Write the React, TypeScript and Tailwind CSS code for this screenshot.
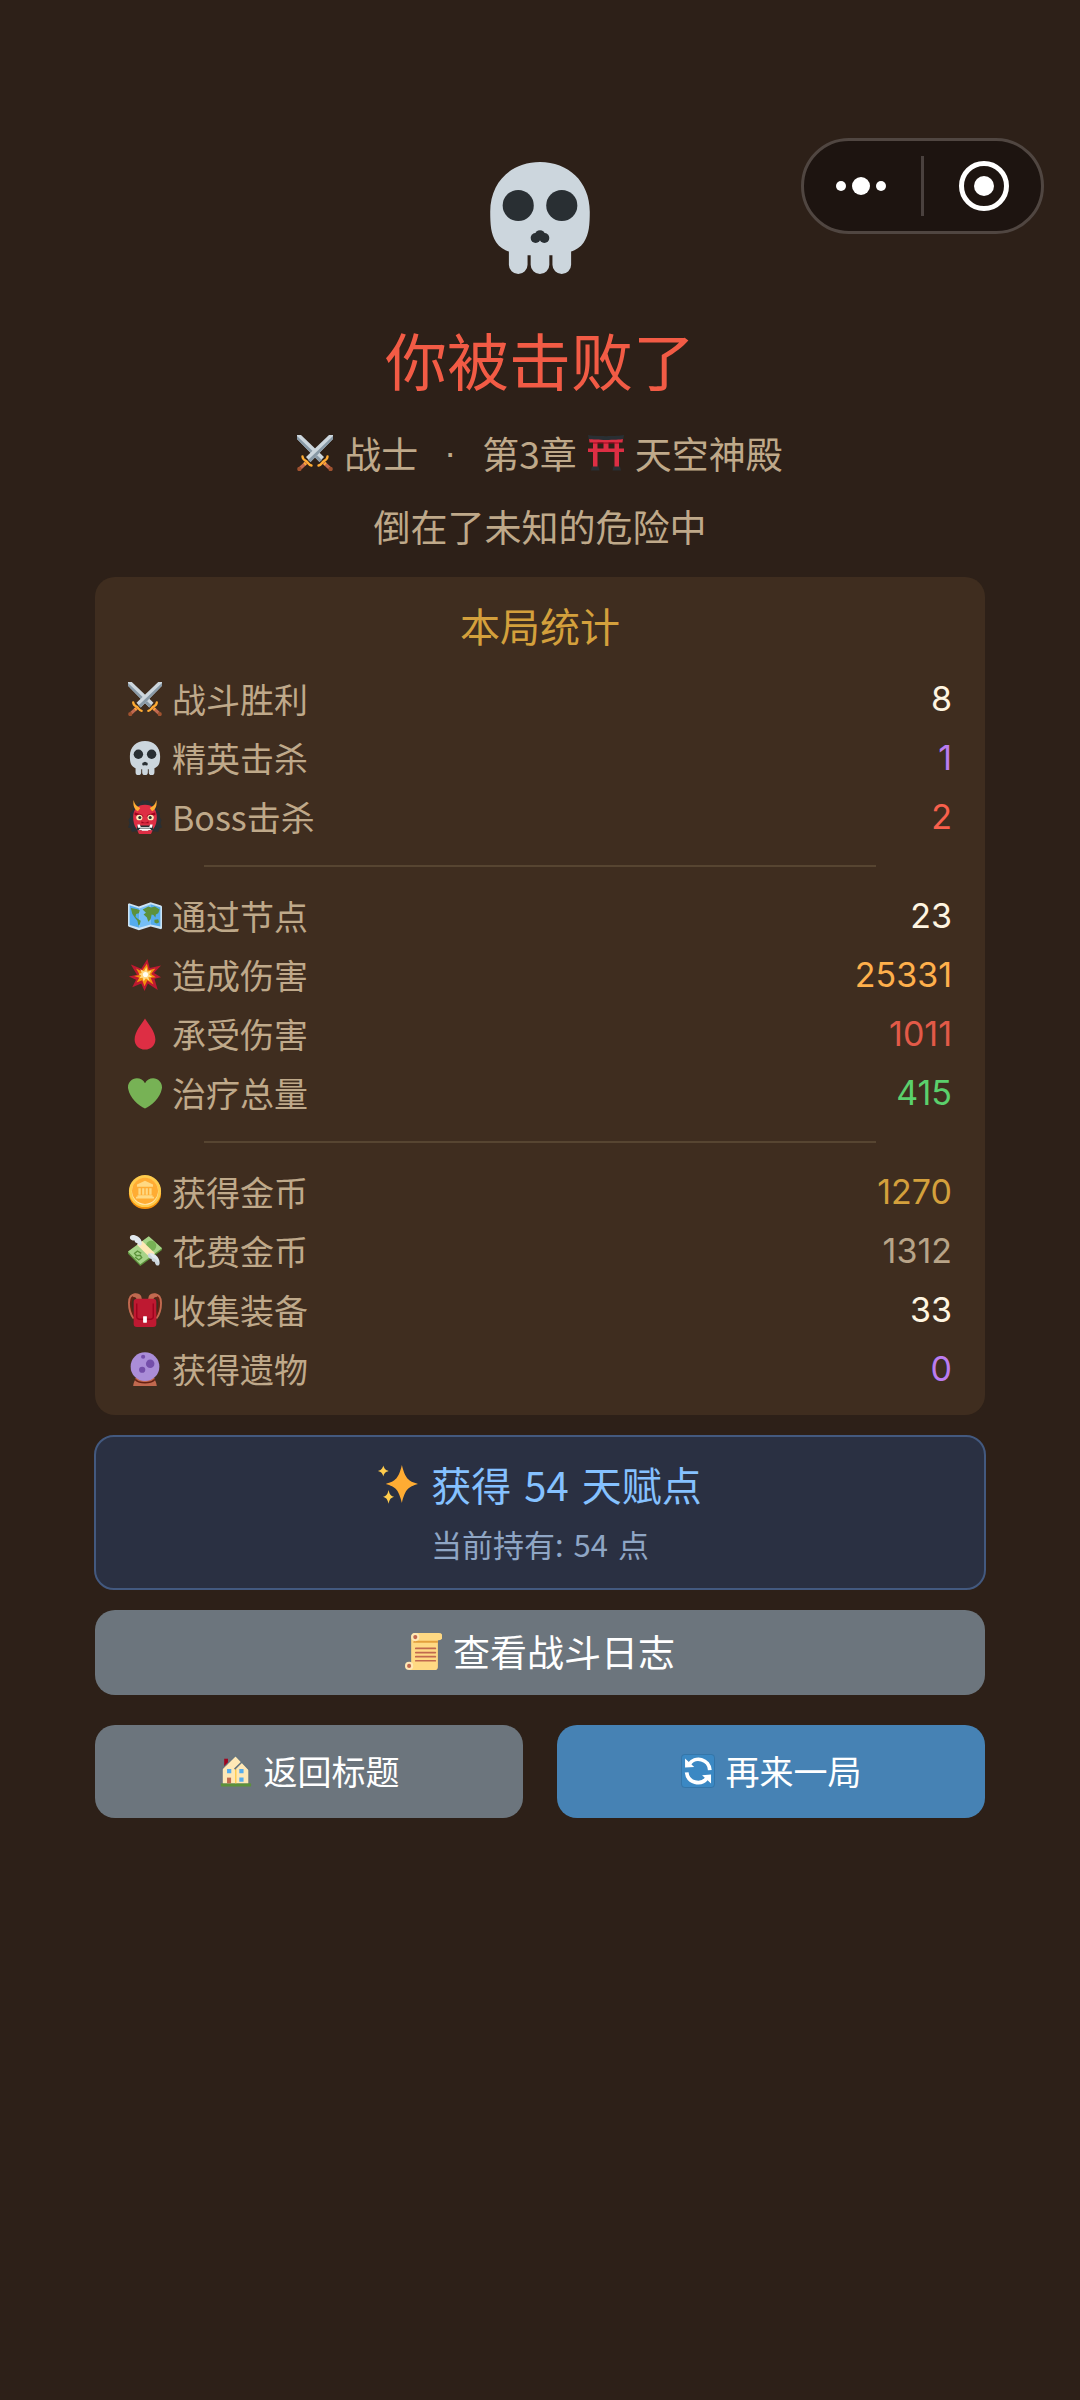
import { ReactNode } from "react";
import clsx from "clsx";

type IconProps = { className?: string };

function Emoji({ className, children }: IconProps & { children: ReactNode }) {
  return (
    <svg viewBox="0 0 36 36" aria-hidden="true" className={clsx("shrink-0", className)}>
      {children}
    </svg>
  );
}

function Skull({ className }: IconProps) {
  return (
    <Emoji className={className}>
      <path
        fill="#CCD6DD"
        d="M18 0C9 0 2 6.2 2 16c0 4 .2 7.2 1.9 9.8 1.1 1.700 2.700 2.500 4.100 3V33a3 3 0 0 0 6 0v-3h1v3a3 3 0 0 0 6 0v-3h1v3a3 3 0 0 0 6 0v-4.200c1.400-.5 3-1.300 4.100-3C33.800 23.200 34 20 34 16 34 6.200 27 0 18 0z"
      />
      <g fill="#292F33">
        <circle cx="11" cy="14" r="5" />
        <circle cx="25" cy="14" r="5" />
        <circle cx="16.6" cy="24.4" r="1.6" />
        <circle cx="19.4" cy="24.4" r="1.6" />
        <circle cx="18" cy="23.5" r="1.6" />
      </g>
    </Emoji>
  );
}

function Swords({ className }: IconProps) {
  return (
    <Emoji className={className}>
      <path fill="#CCD6DD" d="M0 0h4l23 22-4.500 5L0 4z" />
      <path fill="#8899A6" d="M0 1l25 24-2.500 2L0 4z" />
      <path fill="#CCD6DD" d="M36 0h-4L9 22l4.500 5L36 4z" />
      <path fill="#8899A6" d="M36 1L11 25l2.500 2L36 4z" />
      <path stroke="#C1694F" strokeWidth="3.400" d="M10.500 26.500l-7 6.500M25.500 26.500l7 6.500" />
      <path stroke="#FFAC33" strokeWidth="1.600" d="M7 27.500l2 2.500M29 27.500l-2 2.500" />
      <circle cx="2.400" cy="34" r="2.200" fill="#A0522F" />
      <circle cx="33.600" cy="34" r="2.200" fill="#A0522F" />
      <path
        fill="none"
        stroke="#FFAC33"
        strokeWidth="2.400"
        strokeLinecap="round"
        strokeLinejoin="round"
        d="M5.500 21.500c.2 3 1.500 3.500 3.500 4.500s2.500 4 5.500 4.500M30.500 21.500c-.2 3-1.500 3.500-3.500 4.500s-2.500 4-5.500 4.500"
      />
    </Emoji>
  );
}

function Ogre({ className }: IconProps) {
  return (
    <Emoji className={className}>
      <path
        fill="#292F33"
        d="M13 2l3-2 2 1.500L20 0l3 2 3 2 4 3 1 4 3 3-.5 4 2 3-1 4 1.500 4-3 1-1 4-4-1-4 2H12l-4-2-4 1-1-4-3-1 1.500-4-1-4 2-3L2 14l3-3 1-4 4-3z"
      />
      <path fill="#DD2E44" d="M18 5c8 0 12.500 5 12.500 13 0 5-1 9-3.500 12.500-1 1-2 5.500-3 5.500H12c-1 0-2-4.500-3-5.500C6.500 27 5.500 23 5.500 18 5.500 10 10 5 18 5z" />
      <path fill="#FFAC33" d="M6 0c1 5 3 6 7 8.500L10.500 12C6.500 10 5 5 6 0zM30 0c-1 5-3 6-7 8.500l2.500 3.500C29.500 10 31 5 30 0z" />
      <path fill="#A0041E" d="M7 13l8 2.500 1.500 2.500L7 16zM29 13l-8 2.500-1.500 2.500 9.500-2z" />
      <g fill="#FFE8B6">
        <ellipse cx="12" cy="18.500" rx="3.300" ry="3" />
        <ellipse cx="24" cy="18.500" rx="3.300" ry="3" />
      </g>
      <circle cx="12.500" cy="18.500" r="1.600" fill="#292F33" />
      <circle cx="23.500" cy="18.500" r="1.600" fill="#292F33" />
      <path fill="#A0041E" d="M14.500 22.500c1.500 2 5.500 2 7 0l.5 2h-8z" />
      <path fill="#292F33" d="M10 27h16l1 5H9z" />
      <path fill="#FFF" d="M10 26l2.500 0 1 2.500h9l1-2.500H26l-.5 3.500h-15zM11 32l2-1.800h10l2 1.800-3-.3-1 .8h-6l-1-.8z" />
    </Emoji>
  );
}

function Torii({ className }: IconProps) {
  return (
    <Emoji className={className}>
      <path fill="#DD2E44" d="M1 3.500h34l-.5 4h-33zM0 13.500h36V17H0zM5 7h4.500v25H5zM26.500 7H31v25h-4.500zM15.500 7h5v7h-5z" />
      <path fill="#A0041E" d="M5 7.500h26v1H5z" />
      <path fill="#292F33" d="M0 0c6 1.500 30 1.500 36 0l-.7 4C29 5.200 7 5.200.7 4zM4 31.500h6.500l1 4H3zM25.500 31.500H32l1 4h-8.500z" />
    </Emoji>
  );
}

function WorldMap({ className }: IconProps) {
  return (
    <Emoji className={className}>
      <path fill="#CCE3F3" d="M0 5.500l1-1 10.500 3.500L24 3.500 35 7l1 1v23l-1 1-11-3-12.500 4L1 29.500l-1-1z" />
      <path fill="#55ACEE" d="M1.700 6.500L12 10v20.500L1.700 27.500z" />
      <path fill="#75BEF5" d="M12 10l12-4.500V27l-12 3.500z" />
      <path fill="#55ACEE" d="M24 5.500l10.300 3.200v20.500L24 27z" />
      <path
        fill="#5C913B"
        d="M3 9.500l6 1 3.500 1.500-1 3-3 1-.5 3 3 2.500 2.500 1.500-1 4-1.500 1-1-5-2.500-3-3-4.500zM15.500 11l6-3 3 1 4-1 5 3-1.500 4-2.500 1.500-.5 3-2-2.500-2-.5-1 5-2.500 2.500-1.500-4.500-3.500-3 2.500-2zM28 22l4-.5 1 3-2.500 1.500-2.500-1z"
      />
    </Emoji>
  );
}

function Collision({ className }: IconProps) {
  return (
    <Emoji className={className}>
      <path fill="#BE1931" d="M20.500 1l2.500 9.500L35 8l-7.500 8 7.500 4.500-7 1.500L31.500 34 21 27l-3.500 8-3.500-8L4.500 31l4-8L1 19.500l8.500-1.700L3 7l11 4.500z" />
      <path fill="#F4900C" d="M20 6l1.800 7L29 11l-4.500 6 5 3.500-5.500.5 3 7-6.500-4.500-3 6.500-2.500-6.500-6 2.500 3-5-5.500-2 6-1L8.500 11l6 3z" />
      <path fill="#FFD983" d="M19.500 9.500l1.200 5L25 13l-2.500 4.500 3 2.500-4 .5 1.500 4-4-3-2.500 3.500-1-4-3.500.5 2-3-3-1.500 3.500-1-1.500-4 4 2z" />
      <circle cx="18.500" cy="17.500" r="2.700" fill="#FFFDF3" />
    </Emoji>
  );
}

function Droplet({ className }: IconProps) {
  return (
    <Emoji className={className}>
      <path fill="#DD2E44" d="M29 23.800C29 30 24.200 34.500 18 34.500S7 30 7 23.800C7 15 15 7 18 1.500 21 7 29 15 29 23.800z" />
    </Emoji>
  );
}

function GreenHeart({ className }: IconProps) {
  return (
    <Emoji className={className}>
      <path
        fill="#77B255"
        d="M36 11.900C36 6.800 31.800 2.500 26.600 2.500c-3.600 0-6.800 2-8.600 5.200C16.300 4.500 13 2.500 9.400 2.500 4.200 2.500 0 6.800 0 11.900c0 .8.100 1.500.3 2.200C1.700 22.700 11.200 31.800 18 34.300c6.800-2.500 16.300-11.600 17.700-20.200.2-.7.3-1.400.3-2.200z"
      />
    </Emoji>
  );
}

function Coin({ className }: IconProps) {
  return (
    <Emoji className={className}>
      <ellipse cx="18" cy="19.500" rx="17" ry="16.500" fill="#F4900C" />
      <ellipse cx="18" cy="17" rx="17" ry="17" fill="#FFCC4D" />
      <circle cx="18" cy="17.500" r="14" fill="#FFE8B6" />
      <circle cx="18" cy="16.800" r="13.800" fill="#FFAC33" />
      <path
        fill="#FFD983"
        d="M18 6l8.500 4v2.500h-17V10zM11 14h2.500v7H11zM15 14h2.300v7H15zM18.700 14H21v7h-2.300zM22.500 14H25v7h-2.500zM10 21.500h16v1.500h1.500v2h-19v-2H10z"
      />
    </Emoji>
  );
}

function FlyingMoney({ className }: IconProps) {
  return (
    <Emoji className={className}>
      <path fill="#5C913B" d="M0 19L22 3l14 12v2L13 34 0 21z" />
      <path fill="#A6D388" d="M0 18.500L22 2.500 36 15 13 32z" />
      <circle cx="24.500" cy="12.500" r="5.500" fill="#77B255" />
      <path fill="none" stroke="#5C913B" strokeWidth="1.500" d="M14 20.500l-4-2.500-3 2.500 2 2.500 4-.5 1.500 2.500-3 2.500-4-3" />
      <path fill="#FFE8B6" d="M9.500 11.500l5.500-4L28.500 20.500l-5.500 4z" />
      <path fill="#E1E8ED" d="M2 4C2 1 4.500.5 8 1.500S14 5 14.500 8.500c.5 3-1 4.500-3 3.500-1.500-.5-1-2-2-2.500-1.500 0-2.500-1-2.500-2.500C4 7 2 6 2 4z" />
      <path fill="#CCD6DD" d="M21.500 21c2-1.500 5.500-.5 8 1.500s4 5 4 8-2 3.500-3.500 2.500-1-2.500-2-3.500c-2 0-3-1-3-3-2 0-5-3-3.500-5.500z" />
      <path fill="#E1E8ED" d="M22.500 20.500c3-.5 6 1 8 3.500 2 2.500 2.500 4 2 6-2-1.500-2-3-4-4-3-.5-3-2-4-3z" />
    </Emoji>
  );
}

function Backpack({ className }: IconProps) {
  return (
    <Emoji className={className}>
      <path fill="none" stroke="#662113" strokeWidth="3" d="M8 3.500C3.500 4 2 8 2.500 14S5 25 8 28M28 3.500c4.500.5 6 4.500 5.500 10.500S31 25 28 28" />
      <path fill="none" stroke="#C1694F" strokeWidth="2" d="M8 1.500C3 1.500 1 5 1 10.500S3 23 6 27M28 1.500c5 0 7 3.500 7 9S33 23 30 27" />
      <path fill="#C1694F" d="M5 1c3-1.500 8-.5 9 2.500L15 8H9.500C9 5 7.500 4 5 4zM31 1c-3-1.500-8-.5-9 2.500L21 8h5.500C27 5 28.500 4 31 4z" />
      <rect x="6" y="6" width="24" height="30" rx="3.500" fill="#BE1931" />
      <path fill="#A0041E" d="M8.500 11h1.500v14c0 1.500 1 2 2 2h12c1 0 2-.5 2-2V11h1.500v14.500c0 2-1.500 3-3.500 3H12c-2 0-3.500-1-3.500-3z" />
      <rect x="16" y="24.500" width="4" height="7" rx=".5" fill="#FFF" />
    </Emoji>
  );
}

function CrystalBall({ className }: IconProps) {
  return (
    <Emoji className={className}>
      <path fill="#C1694F" d="M8 27h20c0 3 2 4 2.500 9h-25C6 31 8 30 8 27z" />
      <path fill="#662113" d="M8 28c3 5 17 5 20 0l.7 2c-4 4.500-17.400 4.500-21.400 0z" />
      <circle cx="18" cy="15.500" r="15.200" fill="#AA8DD8" />
      <g fill="#744EAA">
        <circle cx="16" cy="5" r="2.200" />
        <circle cx="23.500" cy="12.500" r="4.500" />
        <circle cx="15" cy="18.800" r="3.300" />
      </g>
    </Emoji>
  );
}

function Sparkles({ className }: IconProps) {
  return (
    <Emoji className={className}>
      <path fill="#FFAC33" d="M36 18c-9 2.500-11.500 5-14.500 17C18.500 23 16 20.500 7 18c9-2.500 11.500-5 14.500-17C24.500 13 27 15.500 36 18z" />
      <path
        fill="#FFCC4D"
        d="M9.600 6.300C6.700 7.200 5.700 8.200 4.800 11.200 3.900 8.200 2.900 7.200 0 6.300c2.900-.9 3.900-1.900 4.800-4.900.9 3 1.900 4 4.800 4.900zM14.500 29.500c-3 1-4 2-5 6.200-1-4.200-2-5.200-5-6.200 3-1 4-2 5-6.200 1 4.200 2 5.200 5 6.200z"
      />
    </Emoji>
  );
}

function Scroll({ className }: IconProps) {
  return (
    <Emoji className={className}>
      <path fill="#FFD983" d="M6 4a4 4 0 0 1 4-4h23a3.500 3.500 0 0 1 0 7h-1v26a3 3 0 0 1-3 3H4l2-4z" />
      <path fill="#E39F3D" d="M8.500 7.500H32v2H8z" />
      <circle cx="10" cy="4" r="4" fill="#FFE8B6" />
      <circle cx="10" cy="4" r="2" fill="#C1694F" />
      <circle cx="4" cy="32" r="4" fill="#FFE8B6" />
      <circle cx="4" cy="32" r="2" fill="#C1694F" />
      <path stroke="#C1694F" strokeWidth="1.700" strokeLinecap="round" d="M10.500 15h19M10.500 19h19M10.500 23h19M10.500 27h19" />
    </Emoji>
  );
}

function House({ className }: IconProps) {
  return (
    <Emoji className={className}>
      <rect x="2" y="31" width="32" height="3.500" rx="1" fill="#5C913B" />
      <path fill="#A0041E" d="M5.500 5h4v8h-4z" />
      <path fill="#FFE8B6" d="M17.500 2.500L25 9.500l6 6.500v15H4V15.500z" />
      <path fill="#FFCC4D" d="M17 16h1.500v15H17z" />
      <path fill="none" stroke="#66757F" strokeWidth="1.200" d="M3 16L17.500 1.700 24.500 9" />
      <path fill="none" stroke="#66757F" strokeWidth="1.700" d="M16.500 16l7.700-7.500L32 16.500" />
      <path fill="#55ACEE" d="M8.500 16H13v4.500H8.500zM21.500 16H26v4.500h-4.500zM21.500 25H26v4.500h-4.500z" />
      <path fill="#C1694F" d="M8.500 25h4.300v6H8.500z" />
    </Emoji>
  );
}

function Refresh({ className }: IconProps) {
  return (
    <Emoji className={className}>
      <rect x=".5" y=".5" width="35" height="35" rx="3.500" fill="#3B88C3" stroke="#2F6D9E" strokeWidth=".7" />
      <path fill="none" stroke="#FFF" strokeWidth="4" d="M8.500 11A12 12 0 0 1 30.500 17M6 19.500A12 12 0 0 0 27.500 25.500" />
      <path fill="#FFF" d="M4.300 4.800L14 13.800l-9.700.4zM31.800 31.200l-9.500-8.800 9.500-.6z" />
    </Emoji>
  );
}

const groups = [
  [
    { icon: Swords, label: "战斗胜利", value: "8", color: "text-[#fff5e1]" },
    { icon: Skull, label: "精英击杀", value: "1", color: "text-[#bb7cf0]" },
    { icon: Ogre, label: "Boss击杀", value: "2", color: "text-[#f8604c]" },
  ],
  [
    { icon: WorldMap, label: "通过节点", value: "23", color: "text-[#fff5e1]" },
    { icon: Collision, label: "造成伤害", value: "25331", color: "text-[#ffb04c]" },
    { icon: Droplet, label: "承受伤害", value: "1011", color: "text-[#e35a48]" },
    { icon: GreenHeart, label: "治疗总量", value: "415", color: "text-[#5bd06c]" },
  ],
  [
    { icon: Coin, label: "获得金币", value: "1270", color: "text-[#d4a03c]" },
    { icon: FlyingMoney, label: "花费金币", value: "1312", color: "text-[#b8a488]" },
    { icon: Backpack, label: "收集装备", value: "33", color: "text-[#fff5e1]" },
    { icon: CrystalBall, label: "获得遗物", value: "0", color: "text-[#bb7cf0]" },
  ],
];

function Capsule() {
  return (
    <div className="absolute top-[138px] right-9 flex h-24 w-[243px] items-center rounded-full border-3 border-[#504641] bg-[#1d1410]">
      <button type="button" aria-label="更多" className="flex h-full flex-1 items-center justify-center gap-[6px] pr-[3px]">
        <span className="size-[10px] rounded-full bg-white" />
        <span className="size-[18px] rounded-full bg-white" />
        <span className="size-[10px] rounded-full bg-white" />
      </button>
      <span className="h-[60px] w-[3px] bg-[#4a413e]" />
      <button type="button" aria-label="关闭" className="flex h-full flex-1 items-center justify-center pl-[3px]">
        <span className="flex size-[50px] items-center justify-center rounded-full border-5 border-white">
          <span className="size-5 rounded-full bg-white" />
        </span>
      </button>
    </div>
  );
}

export default function App() {
  return (
    <div className="relative min-h-screen bg-[#2d2018] font-['Noto_Sans_CJK_SC',sans-serif] text-[#bfa98a]">
      <Capsule />
      <main className="flex flex-col px-[95px] pt-[162px]">
        <header className="flex flex-col items-center">
          <Skull className="size-28" />
          <h1 className="mt-10 text-[62px] leading-[90px] text-[#f25b45]">你被击败了</h1>
          <p className="mt-[21px] flex items-center text-[37px] leading-[56px]">
            <Swords className="mr-[11px] size-9" />
            <span>战士</span>
            <span className="w-16 text-center font-['Liberation_Sans',sans-serif]">·</span>
            <span>第3章</span>
            <Torii className="mx-[11px] size-9" />
            <span>天空神殿</span>
          </p>
          <p className="mt-[17px] text-[37px] leading-[56px]">倒在了未知的危险中</p>
        </header>

        <section className="mt-[23px] rounded-[20px] bg-[#3f2d1f] px-[33px] pt-[18px] pb-[17px]">
          <h2 className="mb-[14px] text-center text-[40px] leading-[60px] text-[#d4a03c]">本局统计</h2>
          {groups.map((rows, i) => (
            <div key={i}>
              {i > 0 && <hr className="mx-[76px] my-[19px] border-t-2 border-[#574531]" />}
              <dl>
                {rows.map(({ icon: Icon, label, value, color }) => (
                  <div key={label} className="flex h-[59px] items-center justify-between text-[34px]">
                    <dt className="flex items-center gap-[10px]">
                      <Icon className="size-[34px]" />
                      {label}
                    </dt>
                    <dd className={clsx("font-['Inter',sans-serif]", color)}>{value}</dd>
                  </div>
                ))}
              </dl>
            </div>
          ))}
        </section>

        <section className="mt-5 -mx-px rounded-[20px] border-2 border-[#43597f] bg-[#2a3042] pt-[17px] pb-5 text-center">
          <p className="flex items-center justify-center gap-[13px] text-[40px] leading-[60px] text-[#85c1ff]">
            <Sparkles className="size-10" />
            <span>获得</span>
            <span>54</span>
            <span>天赋点</span>
          </p>
          <p className="mt-[6px] flex justify-center gap-[10px] text-[31px] leading-[48px] text-[#8fa6c5]">
            <span>当前持有:</span>
            <span>54</span>
            <span>点</span>
          </p>
        </section>

        <button type="button" className="mt-5 flex h-[85px] items-center justify-center gap-[11px] rounded-[20px] bg-[#6c757d] pb-[2px] text-[37px] text-white">
          <Scroll className="size-[37px]" />
          查看战斗日志
        </button>

        <div className="mt-[30px] grid grid-cols-2 gap-[34px] text-[34px] text-white">
          <button type="button" className="flex h-[93px] items-center justify-center gap-[11px] rounded-[20px] bg-[#6c757d] pb-[2px]">
            <House className="size-[34px]" />
            返回标题
          </button>
          <button type="button" className="flex h-[93px] items-center justify-center gap-[11px] rounded-[20px] bg-[#4682b4] pb-[2px]">
            <Refresh className="size-[34px]" />
            再来一局
          </button>
        </div>
      </main>
    </div>
  );
}
